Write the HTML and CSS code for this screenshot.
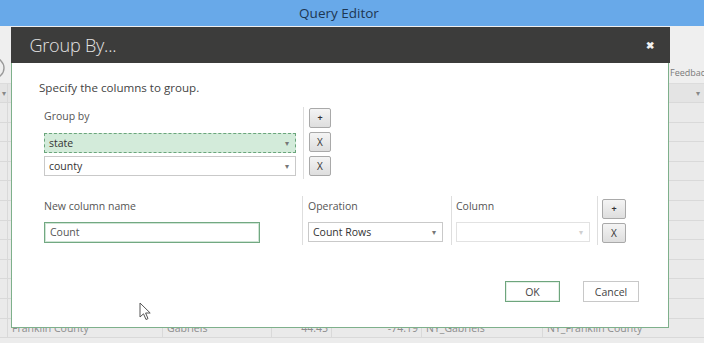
FILE: index.html
```html
<!DOCTYPE html>
<html lang="en">

<head>
    <meta charset="UTF-8">
    <meta name="viewport" content="width=device-width, initial-scale=1.0">
    <title>Query Editor - Group By</title>
    <link rel="stylesheet" href="styles.css">
</head>

<body>
    <div class="titlebar">Query Editor</div>

    <div class="workspace">
        <div class="ribbon">
            <svg class="ribbon-icon" width="6" height="24" viewBox="0 0 6 24">
                <circle cx="-6" cy="12" r="10" fill="none" stroke="#9a9a9a" stroke-width="1.4"/>
            </svg>
            <span class="feedback">Feedback</span>
        </div>

        <div class="grid">
            <div class="row head">
                <div class="cell"><span class="arrow">&#9662;</span></div>
                <div class="cell"></div>
                <div class="cell"></div>
                <div class="cell"></div>
                <div class="cell"></div>
                <div class="cell"></div>
                <div class="cell last"><span class="arrow">&#9662;</span></div>
            </div>
            <div class="row"><div class="cell"></div><div class="cell"></div><div class="cell"></div><div class="cell"></div><div class="cell"></div><div class="cell"></div><div class="cell last"></div></div>
            <div class="row"><div class="cell"></div><div class="cell"></div><div class="cell"></div><div class="cell"></div><div class="cell"></div><div class="cell"></div><div class="cell last"></div></div>
            <div class="row"><div class="cell"></div><div class="cell"></div><div class="cell"></div><div class="cell"></div><div class="cell"></div><div class="cell"></div><div class="cell last"></div></div>
            <div class="row"><div class="cell"></div><div class="cell"></div><div class="cell"></div><div class="cell"></div><div class="cell"></div><div class="cell"></div><div class="cell last"></div></div>
            <div class="row"><div class="cell"></div><div class="cell"></div><div class="cell"></div><div class="cell"></div><div class="cell"></div><div class="cell"></div><div class="cell last"></div></div>
            <div class="row"><div class="cell"></div><div class="cell"></div><div class="cell"></div><div class="cell"></div><div class="cell"></div><div class="cell"></div><div class="cell last"></div></div>
            <div class="row"><div class="cell"></div><div class="cell"></div><div class="cell"></div><div class="cell"></div><div class="cell"></div><div class="cell"></div><div class="cell last"></div></div>
            <div class="row"><div class="cell"></div><div class="cell"></div><div class="cell"></div><div class="cell"></div><div class="cell"></div><div class="cell"></div><div class="cell last"></div></div>
            <div class="row"><div class="cell"></div><div class="cell"></div><div class="cell"></div><div class="cell"></div><div class="cell"></div><div class="cell"></div><div class="cell last"></div></div>
            <div class="row"><div class="cell"></div><div class="cell"></div><div class="cell"></div><div class="cell"></div><div class="cell"></div><div class="cell"></div><div class="cell last"></div></div>
            <div class="row"><div class="cell"></div><div class="cell"></div><div class="cell"></div><div class="cell"></div><div class="cell"></div><div class="cell"></div><div class="cell last"></div></div>
            <div class="row data">
                <div class="cell"></div>
                <div class="cell">Franklin County</div>
                <div class="cell">Gabriels</div>
                <div class="cell num">44.45</div>
                <div class="cell num">-74.19</div>
                <div class="cell">NY_Gabriels</div>
                <div class="cell last">NY_Franklin County</div>
            </div>
        </div>
    </div>

    <div class="dialog">
        <div class="dialog-header">
            <span class="dialog-title">Group By...</span>
            <span class="dialog-close">&#10006;</span>
        </div>

        <div class="dialog-body">
            <div class="intro">Specify the columns to group.</div>

            <div class="group-section">
                <div class="group-fields">
                    <div class="field-label">Group by</div>
                    <div class="select focused">state<span class="caret">&#9662;</span></div>
                    <div class="select">county<span class="caret">&#9662;</span></div>
                </div>
                <div class="group-buttons">
                    <button class="mini plus">+</button>
                    <button class="mini">X</button>
                    <button class="mini">X</button>
                </div>
            </div>

            <div class="agg-section">
                <div class="agg-col name-col">
                    <div class="field-label">New column name</div>
                    <div class="text-input">Count</div>
                </div>
                <div class="agg-col op-col">
                    <div class="field-label">Operation</div>
                    <div class="select op">Count Rows<span class="caret">&#9662;</span></div>
                </div>
                <div class="agg-col column-col">
                    <div class="field-label">Column</div>
                    <div class="select disabled"><span class="caret">&#9662;</span></div>
                </div>
                <div class="agg-col btn-col">
                    <button class="mini plus">+</button>
                    <button class="mini">X</button>
                </div>
            </div>

            <div class="dialog-footer">
                <button class="action primary">OK</button>
                <button class="action">Cancel</button>
            </div>
        </div>
    </div>

    <svg class="pointer" width="13" height="19" viewBox="0 0 13 19">
        <path d="M1 1 L1 15 L4.5 11.8 L7 17.5 L9 16.6 L6.6 11 L11.2 11 Z" fill="#fff" stroke="#555" stroke-width="1" stroke-linejoin="round"/>
    </svg>
</body>

</html>
```

FILE: styles.css
```css
body {
    margin: 0;
    width: 704px;
    height: 343px;
    overflow: hidden;
    font-family: "Open Sans", "Noto Sans", sans-serif;
    background: #ececec;
    position: relative;
}

.titlebar {
    height: 26px;
    line-height: 26px;
    background: #68a9e9;
    color: #1d3652;
    text-align: center;
    font-size: 13.5px;
    padding-right: 26px;
    box-sizing: border-box;
}

/* app behind the dialog */
.ribbon {
    height: 58px;
    background: #efefef;
    position: relative;
    border-bottom: 1px solid #dcdcdc;
    box-sizing: border-box;
}

.ribbon-icon {
    position: absolute;
    left: 0;
    top: 30px;
}

.feedback {
    position: absolute;
    left: 670px;
    top: 40px;
    font-size: 9px;
    color: #7a7a7a;
    white-space: nowrap;
}

.row {
    display: grid;
    grid-template-columns: 8px 155px 109px 60px 90px 121px 1fr;
    height: 19.6px;
    border-bottom: 1px solid #d9d9d9;
    box-sizing: border-box;
    background: #eaeaea;
}

.row.head {
    height: 19px;
    background: #e4e4e4;
}

.cell {
    border-right: 1px solid #d9d9d9;
    font-size: 10.5px;
    color: #8d8d8d;
    line-height: 18px;
    padding-left: 4px;
    overflow: hidden;
    white-space: nowrap;
    position: relative;
}

.cell:first-child {
    padding-left: 0;
}

.cell.num {
    text-align: right;
    padding-right: 3px;
}

.cell.last {
    border-right: none;
}

.arrow {
    position: absolute;
    right: 4px;
    font-size: 8px;
    color: #888;
}

.row.head .cell:first-child .arrow {
    right: 1px;
}

/* dialog */
.dialog {
    position: absolute;
    left: 11px;
    top: 27px;
    width: 658px;
    height: 301px;
    background: #fff;
    border: 1.5px solid #7eb08b;
    border-top: none;
    box-sizing: border-box;
}

.dialog-header {
    height: 36px;
    background: #3c3c3b;
    margin: 0 -1.5px;
    display: flex;
    align-items: center;
    justify-content: space-between;
    padding: 0 16px 0 19px;
}

.dialog-title {
    color: #e3e3e3;
    font-size: 18px;
    font-weight: 300;
    letter-spacing: -0.2px;
}

.dialog-close {
    color: #f2f2f2;
    font-size: 10px;
    font-weight: bold;
}

.dialog-body {
    padding: 18px 29px 0 27px;
}

.intro {
    font-size: 11.6px;
    line-height: 14px;
    color: #444;
}

.field-label {
    font-size: 10.5px;
    line-height: 14px;
    color: #555;
}

.group-section {
    display: flex;
    margin: 12px 0 0 5px;
}

.group-fields {
    width: 252px;
    padding-top: 2px;
}

.group-fields .field-label {
    margin-bottom: 10px;
}

.select {
    position: relative;
    height: 20px;
    line-height: 18px;
    border: 1px solid #c9c9c9;
    box-sizing: border-box;
    padding-left: 4px;
    font-size: 10.5px;
    color: #333;
    background: #fff;
    margin-bottom: 3px;
}

.select.focused {
    background: #d3ebda;
    border: 1px dashed #6aa57b;
}

.caret {
    position: absolute;
    right: 6px;
    top: 0;
    font-size: 8px;
    color: #777;
}

.select.disabled {
    border-color: #e2e2e2;
}

.select.disabled .caret {
    color: #cfcfcf;
}

.group-buttons {
    margin-left: 7px;
    border-left: 1px solid #dedede;
    padding: 1px 0 2px 5px;
    display: flex;
    flex-direction: column;
    gap: 4px;
}

.mini {
    width: 22px;
    height: 20px;
    padding: 0;
    border: 1px solid #a9a9a9;
    border-radius: 2px;
    background: linear-gradient(#f4f4f4, #dedede);
    font-family: "Open Sans", "Noto Sans", sans-serif;
    font-size: 10px;
    color: #333;
    line-height: 18px;
}

.mini.plus {
    font-size: 9px;
    font-weight: bold;
}

.agg-section {
    display: flex;
    margin: 17px 0 0 5px;
}

.agg-col {
    padding: 3px 0 2px 0;
}

.agg-col .field-label {
    margin-bottom: 9px;
}

.agg-col .select {
    margin-bottom: 0;
}

.name-col {
    width: 258px;
}

.text-input {
    width: 216px;
    height: 21px;
    line-height: 19px;
    border: 1px solid #72a882;
    box-shadow: inset 0 0 0 1px #cfe5d5;
    box-sizing: border-box;
    padding-left: 5px;
    font-size: 10.5px;
    color: #555;
}

.op-col {
    width: 143px;
    border-left: 1px solid #dedede;
    padding-left: 5px;
}

.op-col .select {
    width: 135px;
}

.column-col {
    width: 141px;
    border-left: 1px solid #dedede;
    padding-left: 4px;
}

.column-col .select {
    width: 134px;
}

.btn-col {
    border-left: 1px solid #dedede;
    padding-left: 4px;
    display: flex;
    flex-direction: column;
    gap: 4px;
}

.btn-col .mini {
    width: 24px;
}

.dialog-footer {
    display: flex;
    justify-content: flex-end;
    gap: 23px;
    margin-top: 36px;
}

.action {
    width: 56px;
    height: 21px;
    padding: 0;
    border: 1px solid #c8c8c8;
    background: #fff;
    font-family: "Open Sans", "Noto Sans", sans-serif;
    font-size: 10.5px;
    color: #444;
}

.action.primary {
    width: 55px;
    border: 1px solid #6ea57d;
    box-shadow: inset 0 0 0 1px #e3f0e6;
}

.pointer {
    position: absolute;
    left: 139px;
    top: 302px;
}
```
